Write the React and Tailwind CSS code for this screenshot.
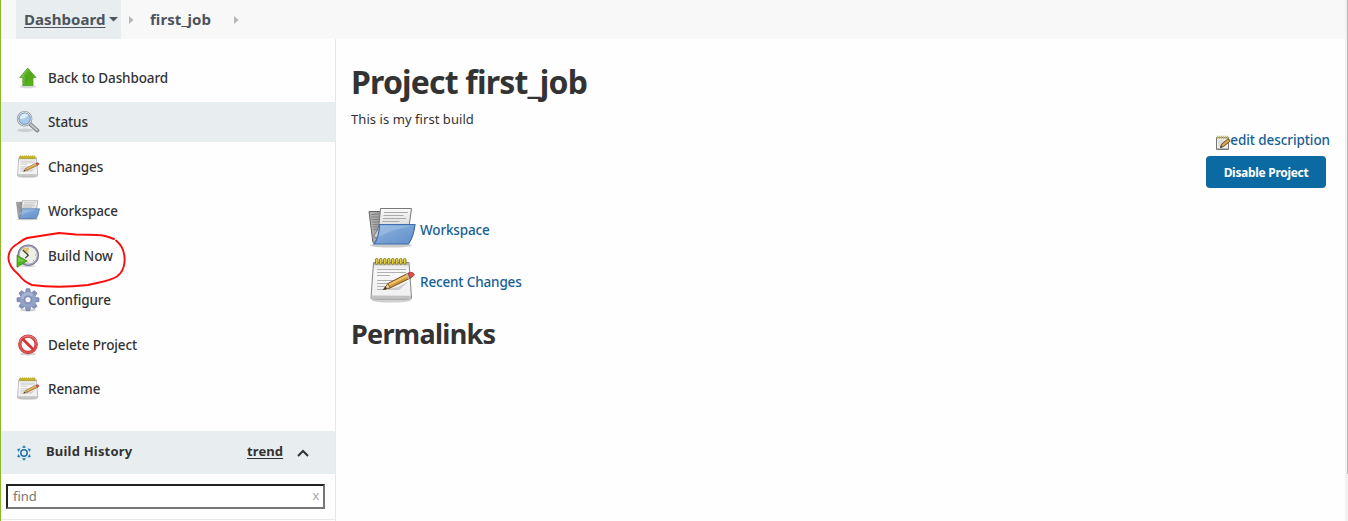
import React from "react";

function ArrowUp() {
  return (
    <svg width="24" height="24" viewBox="0 0 24 24" className="shrink-0">
      <defs>
        <linearGradient id="green" x1="0" y1="0" x2="1" y2="1">
          <stop offset="0" stopColor="#78c63a" />
          <stop offset="0.5" stopColor="#4fa51b" />
          <stop offset="1" stopColor="#5cc40c" />
        </linearGradient>
      </defs>
      <ellipse cx="12" cy="20.5" rx="8" ry="1.8" fill="#000" opacity="0.15" />
      <path d="M11.700 2 20 11.500h-3v8H6.800v-8h-3Z" fill="url(#green)" stroke="#4c9a20" strokeWidth="0.7" />
      <path d="M8 18.500V10.500H6l5.700-7" fill="none" stroke="#b4e38b" strokeWidth="0.7" opacity="0.6" />
    </svg>
  );
}

function Magnifier() {
  return (
    <svg width="24" height="24" viewBox="0 0 24 24" className="shrink-0">
      <ellipse cx="9" cy="20.3" rx="8" ry="1.7" fill="#000" opacity="0.12" />
      <path d="m13.5 13.5 7.8 7" stroke="#858585" strokeWidth="4" strokeLinecap="round" />
      <path d="m14 13.8 7 6.4" stroke="#c4c4c4" strokeWidth="2" strokeLinecap="round" />
      <circle cx="8.6" cy="8.7" r="7" fill="#a9cbee" stroke="#999" strokeWidth="1.5" />
      <circle cx="8.6" cy="8.7" r="6.5" fill="none" stroke="#eee" strokeWidth="1" />
      <circle cx="8.6" cy="8.7" r="5.7" fill="#a8c8ed" stroke="#5782b4" strokeWidth="0.7" />
      <path d="M4 9a5 5 0 0 1 8.5-4Q9 9 4 9Z" fill="#e0edfb" />
    </svg>
  );
}

function Notepad({ size = 24, className = "" }) {
  return (
    <svg width={size} height={size} viewBox="0 0 48 48" className={"shrink-0 " + className}>
      <defs>
        <linearGradient id="paper" x1="0" y1="0" x2="0" y2="1">
          <stop offset="0" stopColor="#e4e4e4" />
          <stop offset="0.25" stopColor="#f8f8f8" />
          <stop offset="1" stopColor="#efefef" />
        </linearGradient>
      </defs>
      <ellipse cx="23" cy="43.5" rx="19" ry="2" fill="#000" opacity="0.18" />
      <path d="M5.500 5.500H41L43.500 41q0 1-1 1H4q-1 0-1-1Z" fill="url(#paper)" stroke="#858585" />
      <path d="m3.700 38.500 39.200.2v2.800H3.500Z" fill="#c2c2c1" />
      <path d="M6 6h34.500v2.200H6Z" fill="#b5b5b5" />
      <g fill="#ead32f" stroke="#85751a" strokeWidth="0.9">
        {[7.5, 11.5, 15.5, 19.5, 23.5, 27.5, 31.5, 35.5].map((x) => (
          <rect key={x} x={x} y="1.5" width="2.5" height="5.8" rx="1.1" />
        ))}
      </g>
      <path d="M9 12.500h29M9 15.500h29M9 18.500h13M9 23.500h20M9 26.500h16M9 29.500h12M9 32.500h7" stroke="#b0b0b0" strokeWidth="1" />
      <path d="m16 33 14-3 10-5-9 8Z" fill="#000" opacity="0.16" />
      <path d="m15.500 32.500 4.500-6L40.500 16l3 4.500L22 31Z" fill="#d59837" stroke="#76501d" strokeWidth="1" />
      <path d="m20.500 27 20-10 1 1.500-20 10Z" fill="#f0c66d" />
      <path d="m15.500 32.500 4.500-6 2 4.500Z" fill="#e9d0a0" stroke="#76501d" strokeWidth="0.7" />
      <path d="m15.200 32.700 2.500-3 1.200 1.800Z" fill="#222" />
      <path d="m38 17.300 2 4.700 2-1-2-4.700Z" fill="#bbb" />
      <path d="m40 16.300 2.700-1q3 0 3.700 2.500-.5 1.500-4.400 3.200Z" fill="#e1504b" stroke="#8b3531" strokeWidth="0.8" />
    </svg>
  );
}

function SmallNotepad({ className = "" }) {
  return (
    <svg width="16" height="16" viewBox="0 0 16 16" className={"shrink-0 " + className}>
      <path d="M1.500 2.500h12v12h-12Z" fill="#eeeeec" stroke="#777" />
      <path d="M2 13h11v1H2Z" fill="#bbb" />
      <path d="M3.500 6h7M3.500 8h5M3.500 10h3" stroke="#bbb" strokeWidth="0.8" />
      <path d="M2.500.8v3.200M4.500.8v3.200M6.500.8v3.200M8.500.8v3.200M10.500.8v3.200M12.500.8v3.200" stroke="#d4b92c" strokeWidth="1.300" />
      <path d="m5.500 12.500 1-3.200 6.300-5.300q2 .3 2.300 2.200L8.500 11.500Z" fill="#d8a253" stroke="#5e431e" strokeWidth="0.9" />
      <path d="m5.300 12.700.7-2 1.300 1.300Z" fill="#222" />
    </svg>
  );
}

function Folder({ size = 24 }) {
  return (
    <svg width={size} height={size} viewBox="0 0 48 48" className="shrink-0">
      <defs>
        <linearGradient id="folderFront" x1="0" y1="0" x2="1" y2="1">
          <stop offset="0" stopColor="#8db3df" />
          <stop offset="1" stopColor="#608fc8" />
        </linearGradient>
        <linearGradient id="folderBack" x1="0" x2="1">
          <stop offset="0" stopColor="#b5b5b5" />
          <stop offset="1" stopColor="#707070" />
        </linearGradient>
        <linearGradient id="sheet" x1="0" y1="0" x2="0" y2="1">
          <stop offset="0" stopColor="#fafafa" />
          <stop offset="1" stopColor="#c8c8c8" />
        </linearGradient>
      </defs>
      <ellipse cx="23" cy="40.500" rx="21" ry="2" fill="#000" opacity="0.2" />
      <path d="M1 6.500h13l1 3h20v29H6Q5 38 4.700 36Z" fill="url(#folderBack)" stroke="#666" />
      <path d="m3 9.500 9-.5M3 12h8M3.500 14.500h8M4 17h7M4.500 19.500h6M5 22h5M5.200 24.500h4" stroke="#777" strokeWidth="0.8" />
      <path d="M12.500 3.500H43.500L41 22 8 33q-2.500 0-2-3 4.500-4 5-11Z" fill="url(#sheet)" stroke="#777" strokeWidth="1" />
      <path d="M16 7.500h24M15.500 10.500h20M15 13.500h23M14.500 16.500h17" stroke="#aaa" strokeWidth="1.100" />
      <path d="M11.500 19.500H47q-1.300 12-6.500 19.500H6q5-6 5.500-19.500Z" fill="url(#folderFront)" stroke="#3f6eac" strokeWidth="1.200" />
      <path d="M12.700 20.800h32.600Q25 24 10.200 32Q12.200 27 12.700 20.800Z" fill="#b5cfea" opacity="0.4" />
    </svg>
  );
}

function ClockPlay() {
  return (
    <svg width="24" height="24" viewBox="0 0 24 24" className="shrink-0">
      <ellipse cx="12" cy="22" rx="8" ry="1.200" fill="#000" opacity="0.15" />
      <circle cx="12.200" cy="11.200" r="9.900" fill="#efefe9" stroke="#74748b" strokeWidth="1.800" />
      <circle cx="12.200" cy="11.200" r="9.300" fill="none" stroke="#a9a9c0" strokeWidth="1.300" />
      <path d="M12 11.200 6.500 4.800Q9 3 12.800 4Z" fill="#e4c96a" />
      <path d="m6.800 6 5.500 5.200-3 3" fill="none" stroke="#3b3b38" strokeWidth="1.200" />
      <path d="M12 3.500v1M19 11h1M12 18.300v1M17 16l.7.7" stroke="#888" />
      <path d="M1 11.200 11.200 17 1 23.300Z" fill="#4fb51d" stroke="#367e13" strokeWidth="0.700" />
      <path d="m1.800 13 6.800 4-6.800 1Z" fill="#8cd95b" opacity="0.6" />
    </svg>
  );
}

function Gear() {
  return (
    <svg width="24" height="24" viewBox="0 0 24 24" className="shrink-0">
      <ellipse cx="12" cy="22" rx="8" ry="1.500" fill="#000" opacity="0.18" />
      <g fill="#8795be" stroke="#6473a0" strokeWidth="0.600">
        {[0, 45, 90, 135, 180, 225, 270, 315].map((a) => (
          <path key={a} d="m9.400 5 .8-4.300h3.600l.8 4.300Z" transform={`rotate(${a} 12 11.7)`} />
        ))}
      </g>
      <circle cx="12" cy="11.700" r="7.900" fill="#94a1c8" />
      <path d="M5 11a7 7 0 0 1 12-4.500Q14 12 5 11Z" fill="#b5bfdc" opacity="0.65" />
      <circle cx="12" cy="11.700" r="4.500" fill="#8493bd" />
      <circle cx="12" cy="11.700" r="3" fill="#fff" stroke="#6977a2" strokeWidth="0.600" />
    </svg>
  );
}

function Stop() {
  return (
    <svg width="24" height="24" viewBox="0 0 24 24" className="shrink-0">
      <ellipse cx="12" cy="21" rx="8" ry="1.500" fill="#000" opacity="0.18" />
      <circle cx="12" cy="11.300" r="8.200" fill="#fbfbfb" stroke="#bd3131" strokeWidth="3.300" />
      <circle cx="12" cy="11.300" r="8.200" fill="none" stroke="#de5050" strokeWidth="2.200" />
      <path d="m6.200 5.500 11.600 11.600" stroke="#d43434" strokeWidth="2.800" />
      <path d="M3.500 9a9 9 0 0 1 17 0" fill="none" stroke="#f19a9a" strokeWidth="0.700" />
    </svg>
  );
}

function BuildSun() {
  return (
    <svg width="16" height="16" viewBox="0 0 16 16" className="shrink-0">
      <circle cx="8" cy="8" r="3.200" fill="none" stroke="#1d74a8" strokeWidth="1.500" />
      <g fill="#1d74a8">
        {[0, 60, 120, 180, 240, 300].map((a) => (
          <path key={a} d="M8 .2 10 2.700H6Z" transform={`rotate(${a} 8 8)`} />
        ))}
      </g>
    </svg>
  );
}

const tasks = [
  { label: "Back to Dashboard", icon: <ArrowUp /> },
  { label: "Status", icon: <Magnifier />, active: true },
  { label: "Changes", icon: <Notepad /> },
  { label: "Workspace", icon: <Folder /> },
  { label: "Build Now", icon: <ClockPlay />, circled: true },
  { label: "Configure", icon: <Gear /> },
  { label: "Delete Project", icon: <Stop /> },
  { label: "Rename", icon: <Notepad /> },
];

function Task({ label, icon, active, circled }) {
  return (
    <a className={"relative flex h-10 items-center gap-2 pl-[15px] text-[13.5px] font-medium tracking-[-0.11px] text-[#333] " + (active ? "bg-[#e8eef0]" : "")}>
      {icon}
      <span className="pt-px">{label}</span>
      {circled && (
        <svg width="122" height="60" viewBox="6 230 122 60" className="absolute -top-[6px] left-[5px]">
          <path
            d="M116 240.500C123 246 125 254 124.500 262Q124 271 117 276.500C108 282 99 282 88 285C70 287 50 287.500 32 285Q24 282 19 275C12 269 8 262 8.500 257Q9 248 18 243.500C21 241 24 239 27 238Q43 235.500 59 233L76 234.500L98 235C104 235 109 237 114 239"
            fill="none"
            stroke="#fa0d0d"
            strokeWidth="1.900"
            strokeLinecap="round"
            strokeLinejoin="round"
          />
        </svg>
      )}
    </a>
  );
}

function Crumb() {
  return (
    <svg width="5" height="8" viewBox="0 0 5 8">
      <path d="M0 0 4.500 4 0 8Z" fill="#b5b5b5" />
    </svg>
  );
}

export default function App() {
  return (
    <div className="flex h-[521px] w-[1348px] overflow-hidden bg-[#fefefe] font-['Noto_Sans','Open_Sans',sans-serif] text-[#333]">
      <div className="flex w-[1345px] flex-col border-l border-[#8cb82b]">
        <header className="flex h-[39px] shrink-0 items-center bg-[#f8f8f8] pl-[15px] text-[15px] font-bold text-[#4d545d]">
          <div className="flex h-full w-[105px] items-center gap-1 bg-[#e8eef0] pl-2">
            <span className="tracking-[0.05px] underline decoration-1 underline-offset-2">Dashboard</span>
            <svg width="9" height="5" viewBox="0 0 9 5" className="shrink-0">
              <path d="M0 0h9L4.500 4.500Z" fill="#4d545d" />
            </svg>
          </div>
          <div className="flex w-7 items-center pl-2"><Crumb /></div>
          <span className="w-[85px] pl-px tracking-[0.05px]">first_job</span>
          <Crumb />
        </header>
        <div className="flex min-h-0 grow">
          <aside className="flex w-[335px] shrink-0 flex-col border-r border-[#e8e8ea]">
            <nav className="flex h-[392px] shrink-0 flex-col gap-[4.5px] pt-[18.5px]">
              {tasks.map((t) => <Task key={t.label} {...t} />)}
            </nav>
            <div className="flex h-[43px] shrink-0 items-center bg-[#e8eef0] pl-[15px] text-[13px] font-bold">
              <BuildSun />
              <span className="-mt-px ml-[14px] w-[201px] tracking-[0.2px]">Build History</span>
              <span className="-mt-px w-[50px] tracking-[0.1px] underline decoration-1 underline-offset-2">trend</span>
              <svg width="12" height="8" viewBox="0 0 12 8">
                <path d="m1 7 5-5 5 5" fill="none" stroke="#333" strokeWidth="2" />
              </svg>
            </div>
            <div className="h-[46px] shrink-0 border-b border-[#e8e8ea] pt-[10px] pl-[5px]">
              <div className="flex h-[25px] w-[319px] items-center justify-between border-2 border-t-[#222] border-r-[#777] border-b-[#777] border-l-[#222] bg-white pr-1 pl-[5px] text-[13px] text-[#777]">
                <span className="pt-px">find</span>
                <span className="-mt-px text-[12.5px] text-[#aaa]">x</span>
              </div>
            </div>
          </aside>
          <main className="flex grow flex-col pl-[15px]">
            <h1 className="mt-5 h-[46px] text-[32px] leading-[46px] font-bold tracking-[-0.82px] whitespace-nowrap">Project first_job</h1>
            <p className="mt-1 h-5 text-[13px] leading-5 tracking-[0.06px]">This is my first build</p>
            <div className="flex flex-col items-end">
              <a className="mt-px mr-[15px] flex h-5 items-center text-[13.5px] font-medium tracking-[-0.08px] text-[#165f96]">
                <SmallNotepad className="mt-[5px]" />
                <span className="-ml-px">edit description</span>
              </a>
              <button className="mt-[6px] mr-[19px] flex h-8 w-[120px] items-center justify-center rounded bg-[#0b6aa2] pt-px text-[12px] font-bold tracking-[-0.3px] text-white">Disable Project</button>
            </div>
            <div className="mt-[17px] flex flex-col gap-1 pl-[17px] text-[13.5px] font-medium tracking-[-0.15px] text-[#165f96]">
              <a className="flex h-12 items-center gap-1"><Folder size={48} /><span className="pt-[2px]">Workspace</span></a>
              <a className="flex h-12 items-center gap-1"><Notepad size={48} /><span className="pt-[2px]">Recent Changes</span></a>
            </div>
            <h2 className="mt-[9px] text-[27px] leading-10 font-bold tracking-[-0.7px]">Permalinks</h2>
          </main>
        </div>
      </div>
      <div className="flex h-full w-[3px] justify-end bg-[#f1f1f1]">
        <div className="h-[474px] w-px bg-[#b9b9b9]" />
      </div>
    </div>
  );
}
